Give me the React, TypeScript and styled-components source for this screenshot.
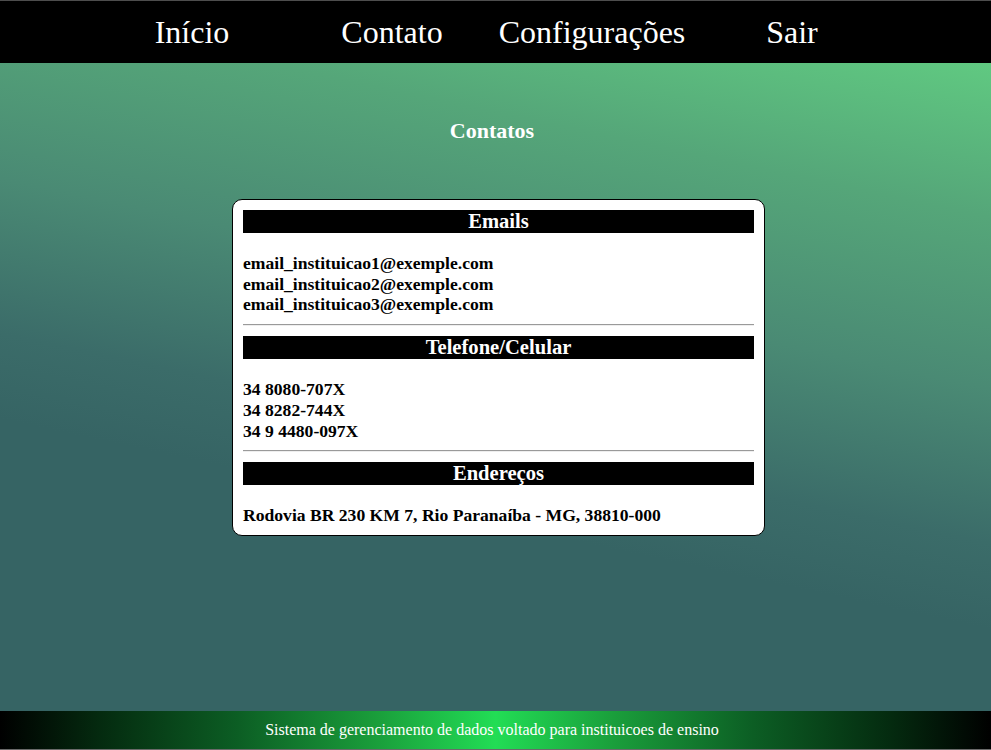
import React from "react";
import styled, { createGlobalStyle } from "styled-components";

const Global = createGlobalStyle`
  html, body { margin: 0; padding: 0; }
  body {
    font-family: "Liberation Serif", "Times New Roman", serif;
    background: #366464;
  }
  * { box-sizing: border-box; }
`;

const Page = styled.div`
  display: flex;
  flex-direction: column;
  width: 991px;
  height: 750px;
  overflow: hidden;
`;

const NavBar = styled.nav`
  height: 63px;
  flex: none;
  background: #000;
  border-top: 1px solid #4d4d4d;
  display: grid;
  grid-template-columns: repeat(4, 200px);
  justify-content: center;
  align-items: center;
  padding: 1px 7px 0 0;
`;

const NavLink = styled.a`
  color: #fff;
  font-size: 32px;
  text-align: center;
  text-decoration: none;
  cursor: pointer;
`;

const Main = styled.main`
  flex: 1;
  display: flex;
  flex-direction: column;
  align-items: center;
  background: linear-gradient(192deg, #60c981 0%, #55a679 18%, #4a8a74 38%, #3b6c69 56%, #366464 66%, #366464 100%);
`;

const Title = styled.h2`
  margin: 55px 7px 0 0;
  font-size: 22px;
  font-weight: bold;
  color: #fff;
  width: 984px;
  text-align: center;
`;

const CardRow = styled.div`
  width: 100%;
  display: flex;
  justify-content: center;
  padding-left: 6px;
  margin-top: 55px;
`;

const Card = styled.section`
  width: 533px;
  background: #fff;
  border: 1px solid #000;
  border-radius: 10px;
  padding: 10px 10px 9px;
`;

const SectionHead = styled.h3`
  margin: 0;
  height: 23px;
  line-height: 23px;
  background: #000;
  color: #fff;
  font-size: 20.6px;
  font-weight: bold;
  text-align: center;
`;

const List = styled.div`
  padding-top: 20px;
  font-size: 17.6px;
  font-weight: bold;
  color: #000;
  line-height: 20.7px;
`;

const Line = styled.div``;

const Rule = styled.hr`
  margin: 9px 0 10px;
  border: none;
  border-top: 1px solid #9a9a9a;
  border-bottom: 1px solid #eeeeee;
  height: 0;
`;

const Footer = styled.footer`
  height: 39px;
  flex: none;
  border-bottom: 1px solid #6a6a6a;
  background: linear-gradient(90deg, #000 0%, #042a0f 10%, #0c5e24 24%, #1a9e3b 38%, #22dd55 50%, #1a9e3b 62%, #0c5e24 76%, #042a0f 90%, #000 100%);
  display: flex;
  align-items: center;
  justify-content: center;
  padding-right: 7px;
  color: #fff;
  font-size: 16px;
`;

const sections = [
  {
    title: "Emails",
    items: [
      "email_instituicao1@exemple.com",
      "email_instituicao2@exemple.com",
      "email_instituicao3@exemple.com",
    ],
  },
  {
    title: "Telefone/Celular",
    items: ["34 8080-707X", "34 8282-744X", "34 9 4480-097X"],
  },
  {
    title: "Endereços",
    items: ["Rodovia BR 230 KM 7, Rio Paranaíba - MG, 38810-000"],
  },
];

export default function App() {
  return (
    <Page>
      <Global />
      <NavBar>
        <NavLink>Início</NavLink>
        <NavLink>Contato</NavLink>
        <NavLink>Configurações</NavLink>
        <NavLink>Sair</NavLink>
      </NavBar>
      <Main>
        <Title>Contatos</Title>
        <CardRow>
          <Card>
            {sections.map((s, i) => (
              <React.Fragment key={s.title}>
                <SectionHead>{s.title}</SectionHead>
                <List>
                  {s.items.map((it) => (
                    <Line key={it}>{it}</Line>
                  ))}
                </List>
                {i < sections.length - 1 && <Rule />}
              </React.Fragment>
            ))}
          </Card>
        </CardRow>
      </Main>
      <Footer>Sistema de gerenciamento de dados voltado para instituicoes de ensino</Footer>
    </Page>
  );
}
